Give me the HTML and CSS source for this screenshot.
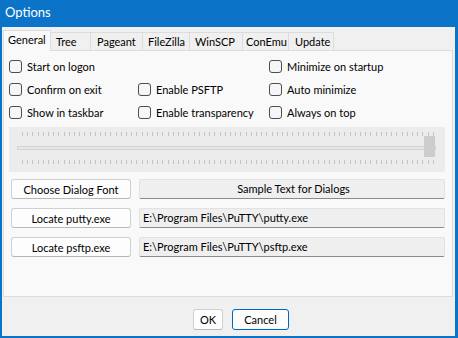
FILE: index.html
```html
<!DOCTYPE html>
<html>
<head>
<meta charset="utf-8">
<link rel="stylesheet" href="styles.css">
</head>
<body>
<div class="window">
  <div class="titlebar">Options</div>
  <div class="client">
    <div class="tabs">
      <div class="tab active">General</div>
      <div class="tab w-tree">Tree</div>
      <div class="tab w-pag">Pageant</div>
      <div class="tab w-fz">FileZilla</div>
      <div class="tab w-scp">WinSCP</div>
      <div class="tab w-ce">ConEmu</div>
      <div class="tab w-up">Update</div>
    </div>
    <div class="panel">
      <div class="checks">
        <label class="chk"><span class="box"></span>Start on logon</label>
        <span></span>
        <label class="chk"><span class="box"></span>Minimize on startup</label>
        <label class="chk"><span class="box"></span>Confirm on exit</label>
        <label class="chk"><span class="box"></span>Enable PSFTP</label>
        <label class="chk"><span class="box"></span>Auto minimize</label>
        <label class="chk"><span class="box"></span>Show in taskbar</label>
        <label class="chk"><span class="box"></span>Enable transparency</label>
        <label class="chk"><span class="box"></span>Always on top</label>
      </div>
      <div class="slider">
        <div class="ticks"></div>
        <div class="track"><div class="thumb"></div></div>
        <div class="ticks"></div>
      </div>
      <div class="rows">
        <button class="btn">Choose Dialog Font</button>
        <div class="field center">Sample Text for Dialogs</div>
        <button class="btn">Locate putty.exe</button>
        <div class="field">E:\Program Files\PuTTY\putty.exe</div>
        <button class="btn">Locate psftp.exe</button>
        <div class="field">E:\Program Files\PuTTY\psftp.exe</div>
      </div>
    </div>
    <div class="footer">
      <button class="btn ok">OK</button>
      <button class="btn cancel">Cancel</button>
    </div>
  </div>
</div>
</body>
</html>
```
FILE: styles.css
```css
* { box-sizing: border-box; }
html, body { margin: 0; padding: 0; }
body {
  width: 458px;
  height: 338px;
  overflow: hidden;
  font-family: "Lato", "Noto Sans", sans-serif;
  font-size: 11px;
  color: #000;
}
.window {
  width: 458px;
  height: 338px;
  background: #0b74c8;
  padding: 0 3px 2px 2px;
  display: flex;
  flex-direction: column;
}
.titlebar {
  height: 27px;
  color: #fff;
  font-size: 13px;
  line-height: 24px;
  padding-left: 3px;
  flex: none;
}
.client {
  flex: 1;
  background: #f0f0f0;
  display: flex;
  flex-direction: column;
  padding: 3px 0 0 1px;
}
.tabs {
  display: flex;
  height: 20px;
  align-items: flex-end;
  position: relative;
  z-index: 1;
}
.tab {
  height: 18px;
  border: 1px solid #dcdcdc;
  border-bottom: none;
  border-left: none;
  background: #f0f0f0;
  line-height: 17px;
  padding-left: 5px;
  white-space: nowrap;
  overflow: hidden;
}
.tab.active {
  height: 21px;
  margin-bottom: -1px;
  background: #f9f9f9;
  border-left: 1px solid #dcdcdc;
  width: 48px;
  padding-left: 4px;
  line-height: 17px;
}
.w-tree { width: 40px; padding-left: 5px; }
.w-pag { width: 52px; padding-left: 6px; }
.w-fz { width: 47px; padding-left: 5px; }
.w-scp { width: 53px; padding-left: 5px; }
.w-ce { width: 46px; padding-left: 3px; }
.w-up { width: 45px; padding-left: 6px; }
.panel {
  width: 450px;
  height: 247px;
  background: #f9f9f9;
  border: 1px solid #dcdcdc;
  padding: 8px 0 0 5px;
  flex: none;
}
.checks {
  display: grid;
  grid-template-columns: 129px 131px auto;
  grid-auto-rows: 23px;
}
.chk {
  display: flex;
  align-items: center;
  gap: 5px;
  height: 15px;
  white-space: nowrap;
}
.box {
  width: 13px;
  height: 13px;
  border: 1px solid #4d4d4d;
  border-radius: 3px;
  background: #f6f6f6;
  flex: none;
}
.slider {
  margin-top: -1px;
  width: 436px;
  height: 45px;
  background: #ececec;
  display: flex;
  flex-direction: column;
  padding: 5px 0 0 8px;
}
.ticks {
  height: 4px;
  width: 414px;
  margin-left: 5px;
  background: repeating-linear-gradient(90deg, #c3c3c3 0 1px, transparent 1px 5.2px);
}
.track {
  height: 4px;
  width: 419px;
  margin: 10px 0 10px 0;
  background: #e6e6e6;
  border: 1px solid #d4d4d4;
  position: relative;
}
.thumb {
  position: absolute;
  right: 0;
  top: -11px;
  width: 11px;
  height: 21px;
  background: #cccccc;
}
.rows {
  margin-top: 7px;
  display: grid;
  grid-template-columns: 120px 306px;
  column-gap: 8px;
  row-gap: 9px;
  padding-left: 2px;
}
.btn {
  font-family: inherit;
  font-size: 11px;
  height: 20px;
  background: #fdfdfd;
  border: 1px solid #d0d0d0;
  border-bottom-color: #b8b8b8;
  border-radius: 3px;
  padding: 0;
  color: #000;
  line-height: 17px;
}
.field {
  height: 20px;
  background: #efefef;
  border: 1px solid #e2e2e2;
  border-bottom: 1px solid #8b8b8b;
  border-radius: 2px;
  line-height: 18px;
  padding-left: 3px;
  white-space: nowrap;
}
.field.center { text-align: center; }
.footer {
  display: flex;
  gap: 9px;
  padding: 12px 0 0 190px;
}
.ok { width: 30px; height: 21px; }
.cancel { width: 57px; height: 21px; border: 1px solid #0067c0; }
```
